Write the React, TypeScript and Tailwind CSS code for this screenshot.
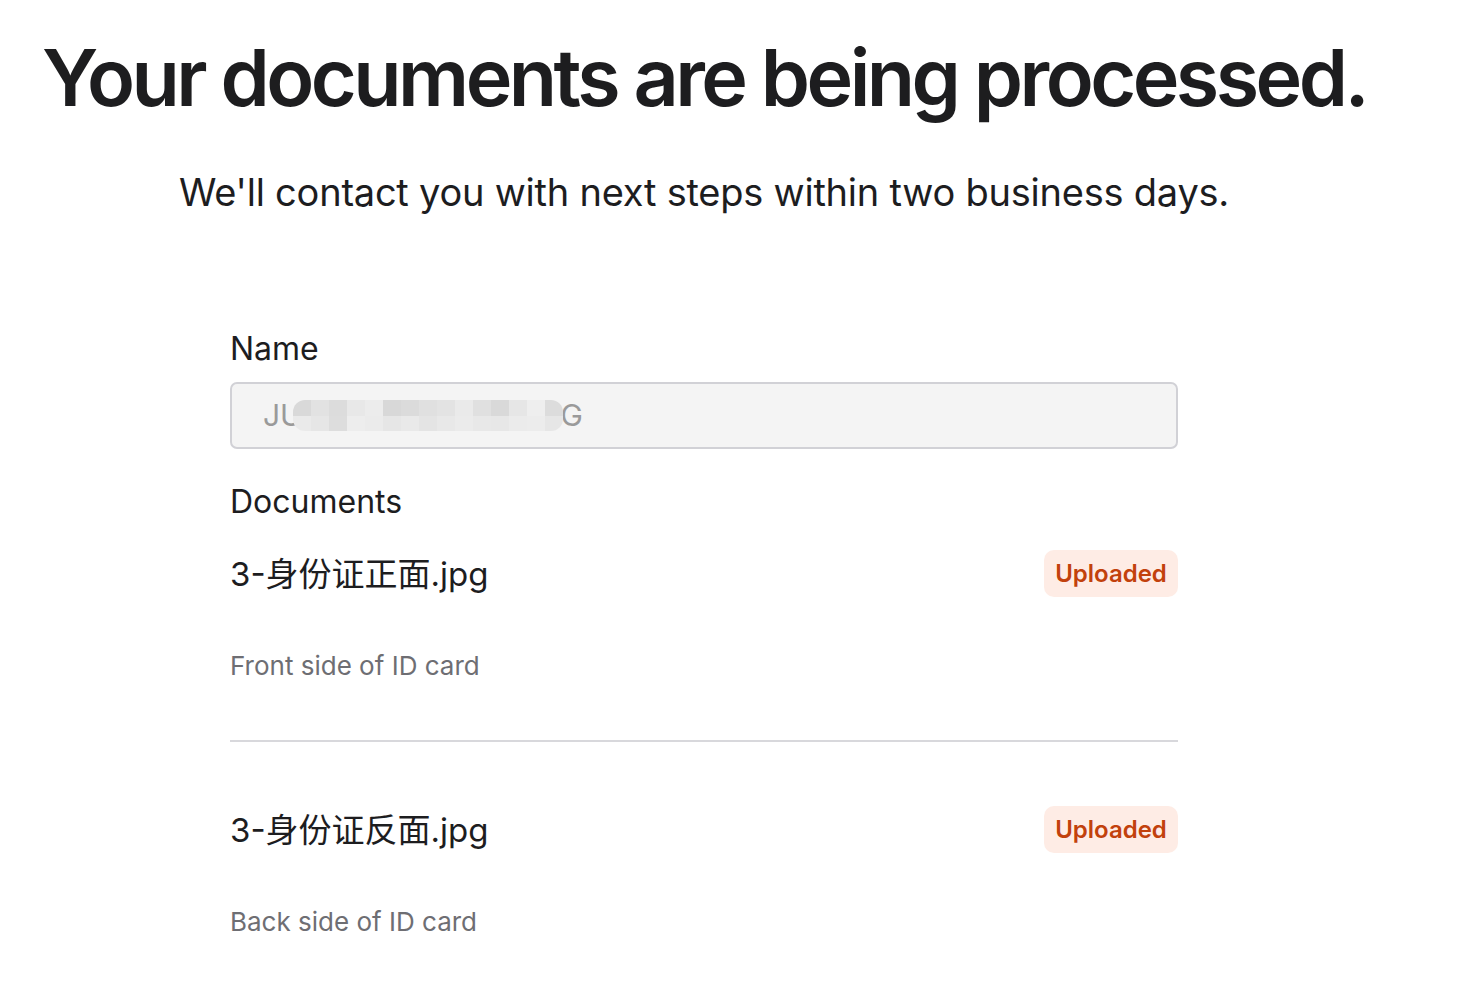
import React from "react"

const fontStack = 'Inter, "Noto Sans CJK SC", "Noto Sans", sans-serif'

// pixelated mask over the redacted part of the name
const mosaic = [
  ["#d9d9d9", "#e2e2e2", "#dcdcdc", "#e8e8e8", "#ececec", "#d8d8d8", "#dbdbdb", "#e0e0e0", "#e3e3e3", "#eaeaea", "#e0e0e0", "#d9d9d9", "#e6e6e6", "#eeeeee", "#dcdcdc"],
  ["#eaeaea", "#e6e6e6", "#dddddd", "#ededed", "#ebebeb", "#e6e6e6", "#e9e9e9", "#e4e4e4", "#e8e8e8", "#ebebeb", "#e8e8e8", "#e7e7e7", "#ebebeb", "#ececec", "#e6e6e6"],
]

const documents = [
  { file: "3-身份证正面.jpg", note: "Front side of ID card" },
  { file: "3-身份证反面.jpg", note: "Back side of ID card" },
]

function StatusBadge() {
  return (
    <span className="flex h-[47px] w-[134px] items-center justify-center rounded-[10px] bg-[#feece5] text-[24px] font-semibold text-[#c2410c]">
      Uploaded
    </span>
  )
}

export default function App() {
  return (
    <div className="min-h-screen bg-white text-[#1d1d1f]" style={{ fontFamily: fontStack }}>
      <div className="flex w-[1408px] flex-col items-center">
        <h1 className="mt-[34px] whitespace-nowrap text-[79px] font-semibold leading-[86px] tracking-[-0.045em]">
          Your documents are being processed.
        </h1>
        <p className="mt-[48px] whitespace-nowrap text-[38px] leading-[48px] tracking-[-0.006em]">
          We'll contact you with next steps within two business days.
        </p>

        <div className="mt-[113px] flex w-[948px] flex-col">
          <label className="text-[32px] leading-[40px]">Name</label>
          <div className="mt-[13px] flex h-[67px] items-center rounded-[7px] border-2 border-[#d1d1d6] bg-[#f4f4f4] px-[31px] text-[30px] text-[#9a9a9a]">
            <span>JU</span>
            <span className="relative z-10 -ml-[9px] -mr-[3px] flex h-[31px] flex-col overflow-hidden rounded-[12px] blur-[0.6px]">
              {mosaic.map((row, r) => (
                <span key={r} className="flex flex-1">
                  {row.map((c, i) => (
                    <span key={i} className="w-[18px]" style={{ background: c }} />
                  ))}
                </span>
              ))}
            </span>
            <span>G</span>
          </div>

          <label className="mt-[33px] text-[32px] leading-[40px]">Documents</label>

          {documents.map((d, i) => (
            <div key={d.file}>
              {i > 0 && <div className="mt-[56px] h-[2px] bg-[#d8d8dc]" />}
              <div className={i > 0 ? "mt-[64px]" : "mt-[28px]"}>
                <div className="flex items-center justify-between">
                  <span className="text-[33px] leading-[44px]">{d.file}</span>
                  <StatusBadge />
                </div>
                <p className="mt-[51px] text-[26px] leading-[36px] text-[#6e6e73]">{d.note}</p>
              </div>
            </div>
          ))}
        </div>
      </div>
    </div>
  )
}
